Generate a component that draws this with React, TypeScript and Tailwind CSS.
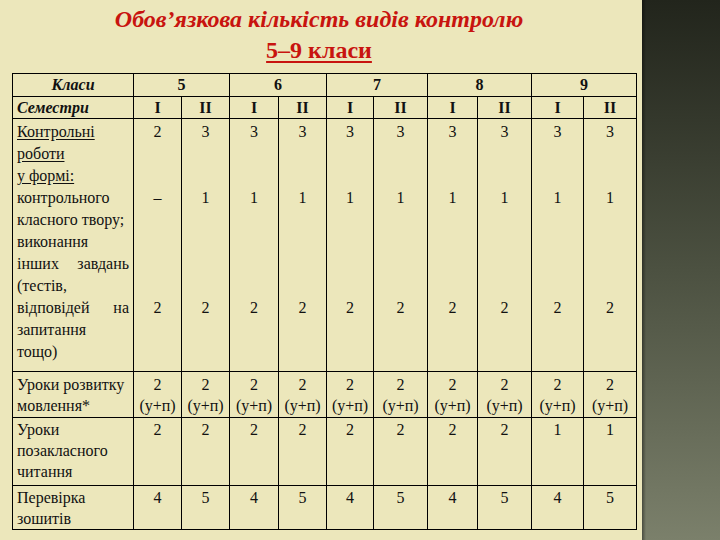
const grades = ["5", "6", "7", "8", "9"]
const colWidths = [121, 48, 48, 49, 48, 47, 54, 50, 54, 52, 53]

const controlA = ["2", "3", "3", "3", "3", "3", "3", "3", "3", "3"]
const controlB = ["–", "1", "1", "1", "1", "1", "1", "1", "1", "1"]
const controlC = ["2", "2", "2", "2", "2", "2", "2", "2", "2", "2"]
const reading = ["2", "2", "2", "2", "2", "2", "2", "2", "1", "1"]
const notebooks = ["4", "5", "4", "5", "4", "5", "4", "5", "4", "5"]

const cell = "border border-black px-[4px] pt-[2px] align-top"
const valueCell = "border border-black pt-[2px] align-top text-center"
const cellTight = "border border-black px-[4px] pt-px align-top"
const valueTight = "border border-black pt-px align-top text-center"
const line = "h-[22px] leading-[22px]"
const lineTight = "h-[21px] leading-[21px]"

function BigLabel() {
  const rows: { text: string; u?: boolean; j?: boolean }[] = [
    { text: "Контрольні", u: true },
    { text: "роботи", u: true },
    { text: "у формі:", u: true },
    { text: "контрольного" },
    { text: "класного твору;" },
    { text: "виконання" },
    { text: "інших завдань", j: true },
    { text: "(тестів," },
    { text: "відповідей на", j: true },
    { text: "запитання" },
    { text: "тощо)" },
  ]
  return (
    <div className="flex flex-col">
      {rows.map((r, i) => (
        <div
          key={i}
          className={`${line} ${r.u ? "underline underline-offset-2" : ""} ${r.j ? "text-justify [text-align-last:justify]" : ""}`}
        >
          {r.text}
        </div>
      ))}
    </div>
  )
}

function BigValues({ i }: { i: number }) {
  const slots = Array.from({ length: 11 }, () => "")
  slots[0] = controlA[i]
  slots[3] = controlB[i]
  slots[8] = controlC[i]
  return (
    <div className="flex flex-col">
      {slots.map((s, k) => (
        <div key={k} className={line}>
          {s}
        </div>
      ))}
    </div>
  )
}

export default function App() {
  return (
    <div className="flex h-[540px] w-[720px] overflow-hidden font-['Liberation_Serif',serif] text-[16px] text-[#111]">
      <div className="flex w-[642px] shrink-0 flex-col bg-[#ece7bb] pl-[12px] pr-[6px]">
        <div className="-ml-[12px] w-[638px] pt-[4px] text-center text-[24px] font-bold leading-[31px] text-[#c8140f]">
          <div className="italic">Обов’язкова кількість видів контролю</div>
          <div className="underline decoration-2 underline-offset-[3px]">5–9 класи</div>
        </div>

        <table className="mt-[7px] w-[624px] table-fixed border-collapse">
          <colgroup>
            {colWidths.map((w, i) => (
              <col key={i} style={{ width: w }} />
            ))}
          </colgroup>
          <tbody>
            <tr className="h-[23px]">
              <td className="border border-black px-[4px] py-0 text-center font-bold italic leading-[20px]">Класи</td>
              {grades.map((g) => (
                <td key={g} colSpan={2} className="border border-black py-0 text-center font-bold leading-[20px]">
                  {g}
                </td>
              ))}
            </tr>
            <tr className="h-[22px]">
              <td className="border border-black px-[4px] py-0 font-bold italic leading-[20px]">Семестри</td>
              {grades.map((g) => [
                <td key={g + "a"} className="border border-black py-0 text-center font-bold leading-[20px]">I</td>,
                <td key={g + "b"} className="border border-black py-0 text-center font-bold leading-[20px]">II</td>,
              ])}
            </tr>
            <tr className="h-[253px]">
              <td className={cell}>
                <BigLabel />
              </td>
              {controlA.map((_, i) => (
                <td key={i} className={valueCell}>
                  <BigValues i={i} />
                </td>
              ))}
            </tr>
            <tr className="h-[46px]">
              <td className={cell}>
                <div className={lineTight}>Уроки розвитку</div>
                <div className={lineTight}>мовлення*</div>
              </td>
              {controlA.map((_, i) => (
                <td key={i} className={valueCell}>
                  <div className={lineTight}>2</div>
                  <div className={lineTight}>(у+п)</div>
                </td>
              ))}
            </tr>
            <tr className="h-[68px]">
              <td className={cellTight}>
                <div className={lineTight}>Уроки</div>
                <div className={lineTight}>позакласного</div>
                <div className={lineTight}>читання</div>
              </td>
              {reading.map((v, i) => (
                <td key={i} className={valueTight}>
                  <div className={lineTight}>{v}</div>
                </td>
              ))}
            </tr>
            <tr className="h-[44px]">
              <td className={cellTight}>
                <div className={lineTight}>Перевірка</div>
                <div className={lineTight}>зошитів</div>
              </td>
              {notebooks.map((v, i) => (
                <td key={i} className={valueTight}>
                  <div className={lineTight}>{v}</div>
                </td>
              ))}
            </tr>
          </tbody>
        </table>
      </div>
      <div className="relative w-[78px] shrink-0 bg-gradient-to-b from-[#22251c] via-[#4c5141] to-[#7b806b]">
        <div className="absolute inset-y-0 left-0 w-[4px] bg-gradient-to-r from-black/40 to-transparent" />
      </div>
    </div>
  )
}
